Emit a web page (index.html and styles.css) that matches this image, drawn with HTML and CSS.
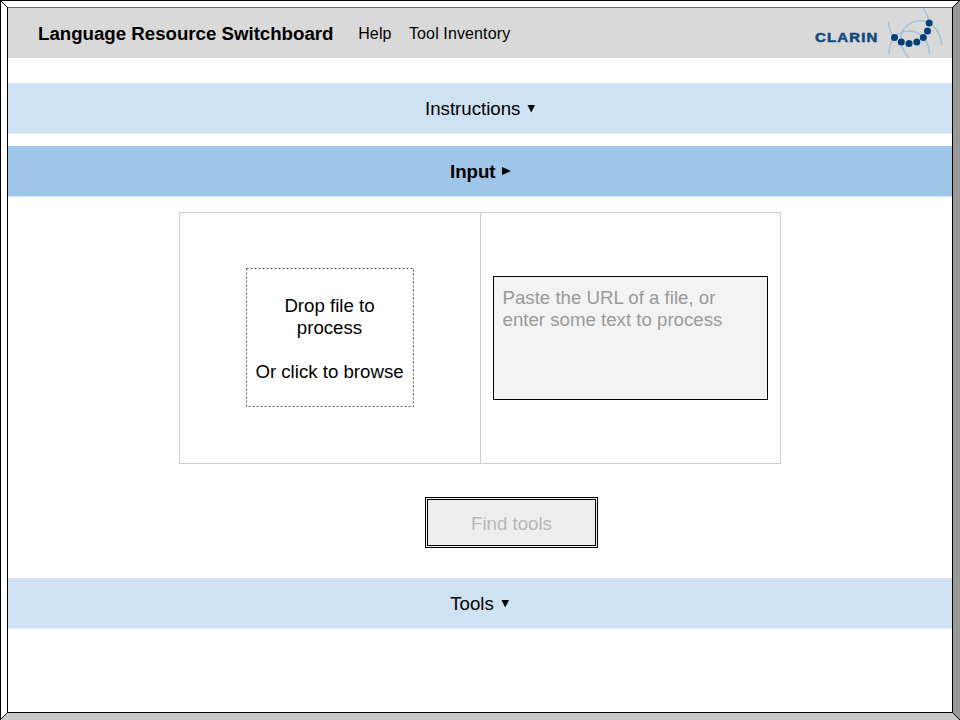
FILE: index.html
```html
<!DOCTYPE html>
<html lang="en">
<head>
<meta charset="utf-8">
<title>Language Resource Switchboard</title>
<link rel="stylesheet" href="styles.css">
</head>
<body>
<svg class="frame" viewBox="0 0 960 720" aria-hidden="true">
  <path fill="#fff" d="M0 0H960L952 8H8V712L0 720Z"/>
  <path fill="#999" d="M960 0V720L952 712V8Z"/>
  <path fill="#c9c9c9" d="M0 720L8 712H952L960 720Z"/>
  <path fill="none" stroke="#000" d="M.5 720V.5H960M7.5 7V712.5H952.5V7M0 0L8 8M960 0L952 8M0 720L8 712M960 720L952 712"/>
  <path fill="none" stroke="#6b6b6b" d="M8 7.5H952"/>
</svg>
<div class="page">
  <header class="topbar">
    <h1 class="title">Language Resource Switchboard</h1>
    <nav class="nav"><a>Help</a><a>Tool Inventory</a></nav>
    <svg class="logo" width="144" height="50" viewBox="808 8 144 50" aria-label="CLARIN">
      <text class="logo-text" transform="translate(815 42) scale(1.200 1)" textLength="52">CLARIN</text>
      <g fill="none" stroke="#a3c3dc" stroke-width="1.500">
        <path d="M888.700 22C888.700 28 890.500 33 894.500 38"/>
        <path d="M889 54.500C889 47 890 42 894.500 37.500C899 32.500 903 31 909 31C915 31 919.500 33 923.300 37.500C928 43 929.500 48 929.500 54.500"/>
        <path d="M909.500 58C904 53 901.500 47 901 41C900.700 35 902 31 905 27.500C910 22 917 20.300 924 21C930 22 934 26 937.500 31C940 35 941.500 40 941.500 45.500"/>
        <path d="M923.300 8.500C926.500 12.500 928.500 17 929.200 23"/>
      </g>
      <g fill="#00407a">
        <circle cx="894.500" cy="37.500" r="3.500"/><circle cx="901.300" cy="42" r="3.500"/><circle cx="909" cy="43.500" r="3.500"/><circle cx="916.800" cy="42" r="3.500"/><circle cx="923.300" cy="37.500" r="3.500"/><circle cx="927.500" cy="31" r="3.500"/><circle cx="929.200" cy="23" r="3.500"/>
      </g>
    </svg>
  </header>
  <section class="band instructions">Instructions<svg class="arrow" width="9" height="8" viewBox="0 0 9 8"><path d="M.5 0H8L4.250 7.500Z"/></svg></section>
  <section class="band input">Input<svg class="arrow" width="9" height="8" viewBox="0 0 9 8"><path d="M0 0L9 4L0 8Z"/></svg></section>
  <div class="sources">
    <div class="cell">
      <div class="drop">
        <svg class="drop-edge" width="168" height="139"><rect x=".5" y=".5" width="167" height="138"/></svg>
        <p>Drop file to<br>process</p><p>Or click to browse</p>
      </div>
    </div>
    <div class="cell">
      <div class="entry">Paste the URL of a file, or<br>enter some text to process</div>
    </div>
  </div>
  <div class="find">Find tools</div>
  <section class="band tools">Tools<svg class="arrow" width="9" height="8" viewBox="0 0 9 8"><path d="M.5 0H8L4.250 7.500Z"/></svg></section>
</div>
</body>
</html>
```
FILE: styles.css
```css
* { box-sizing: border-box; }
html { background: #fff; }
body {
  margin: 0;
  width: 960px;
  height: 720px;
  overflow: hidden;
  font-family: "Liberation Sans", Arial, sans-serif;
  font-size: 18.67px;
  line-height: 22px;
  color: #000;
}
.frame { position: absolute; width: 960px; height: 720px; }
.page {
  margin: 0 8px;
  padding-top: 8px;
  width: 944px;
  display: flex;
  flex-direction: column;
}
.topbar {
  height: 50px;
  padding-left: 30px;
  background: #d9d9d9;
  display: flex;
  align-items: center;
}
.title { margin: 0; padding-top: 2px; width: 320.2px; font-size: 18.67px; white-space: nowrap; }
.nav { display: flex; gap: 17.4px; padding-top: 2px; font-size: 16px; letter-spacing: .12px; }
.logo { margin-left: auto; }
.logo-text { font: bold 12.5px "Liberation Sans", sans-serif; fill: #14477c; stroke: #14477c; stroke-width: .5px; }
.band {
  height: 51px;
  padding-top: 1px;
  background: #cfe2f3;
  border-bottom: 1px solid #e7f0f9;
  display: flex;
  align-items: center;
  justify-content: center;
}
.instructions { margin-top: 25px; padding-top: 2px; padding-left: 1px; }
.input { margin-top: 12px; padding-top: 2px; padding-left: 1px; background: #9fc5e8; border-color: #cfe2f3; font-weight: bold; }
.tools { margin-top: 30px; padding-top: 2px; }
.arrow { margin: -1px 0 0 6.5px; }
.input .arrow { margin-top: -3px; }
.tools .arrow { margin-left: 7px; }
.sources {
  width: 602px;
  height: 252px;
  margin: 15px 0 0 171px;
  border: 1px solid #ccc;
  display: grid;
  grid-template-columns: 301px 299px;
}
.cell { display: flex; align-items: center; justify-content: center; }
.cell:first-child { border-right: 1px solid #ccc; padding-bottom: 1px; }
.drop {
  position: relative;
  width: 168px;
  height: 139px;
  padding: 27px 1px 0 0;
  text-align: center;
}
.drop-edge { position: absolute; top: 0; left: 0; }
.drop-edge rect { fill: none; stroke: #595959; stroke-dasharray: 2 2; }
.drop p { margin: 0 0 22px; }
.entry {
  width: 275px;
  height: 124px;
  padding: 10px 8.5px;
  border: 1px solid #000;
  background: #f3f3f3;
  color: #999;
}
.find {
  width: 173px;
  height: 51px;
  margin: 33px 0 0 417px;
  padding-top: 2px;
  border: 3px double #000;
  background: #eee;
  color: #b7b7b7;
  display: flex;
  align-items: center;
  justify-content: center;
}
```
